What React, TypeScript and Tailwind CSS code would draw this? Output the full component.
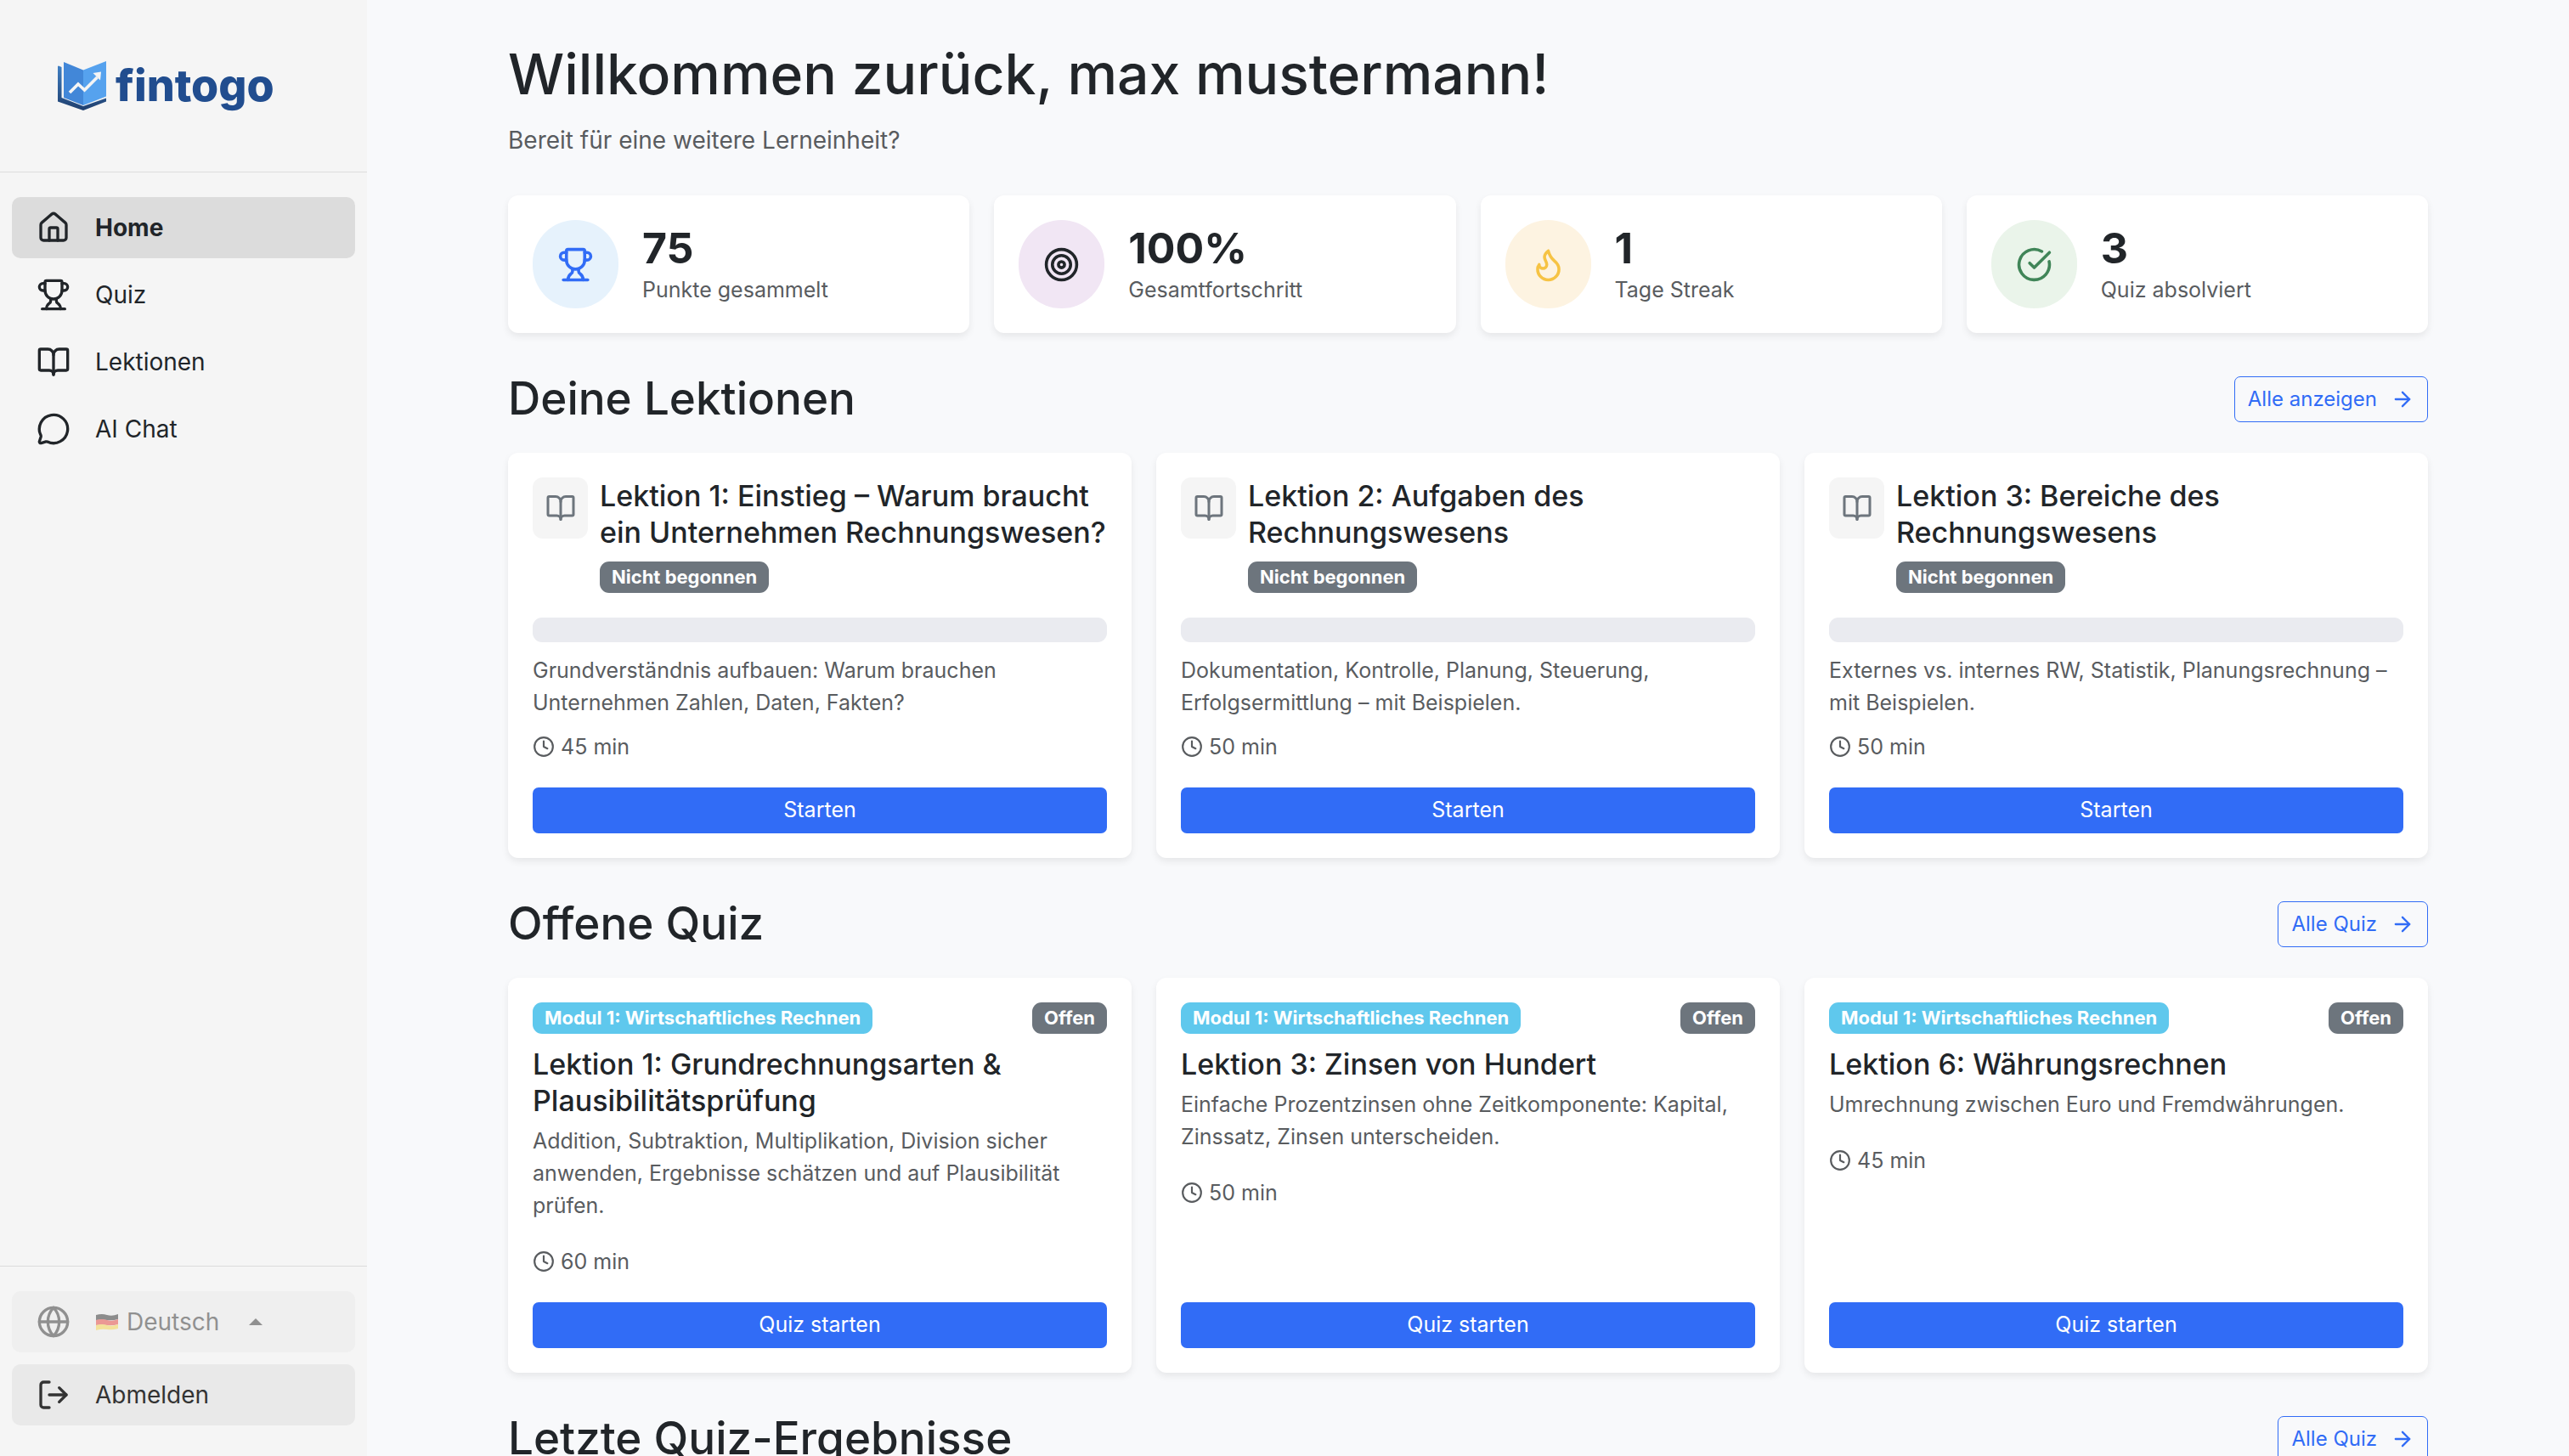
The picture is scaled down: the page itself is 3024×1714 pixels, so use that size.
import React from "react";
import {
  ArrowRight,
  BookOpen,
  CircleCheckBig,
  Clock,
  Flame,
  Globe,
  House,
  LogOut,
  MessageCircle,
  Target,
  Trophy,
  type LucideIcon,
} from "lucide-react";

interface NavItem {
  label: string;
  icon: LucideIcon;
  active?: boolean;
}

interface Stat {
  value: string;
  label: string;
  icon: LucideIcon;
  circle: string;
  color: string;
}

interface Lesson {
  title: string;
  description: string;
  minutes: number;
}

const navItems: NavItem[] = [
  { label: "Home", icon: House, active: true },
  { label: "Quiz", icon: Trophy },
  { label: "Lektionen", icon: BookOpen },
  { label: "AI Chat", icon: MessageCircle },
];

const stats: Stat[] = [
  { value: "75", label: "Punkte gesammelt", icon: Trophy, circle: "bg-[#e6f2fc]", color: "text-[#316cf6]" },
  { value: "100%", label: "Gesamtfortschritt", icon: Target, circle: "bg-[#f1e6f4]", color: "text-[#212529]" },
  { value: "1", label: "Tage Streak", icon: Flame, circle: "bg-[#fdf3e1]", color: "text-[#f6c344]" },
  { value: "3", label: "Quiz absolviert", icon: CircleCheckBig, circle: "bg-[#eaf4ea]", color: "text-[#408558]" },
];

const lessons: Lesson[] = [
  {
    title: "Lektion 1: Einstieg – Warum braucht ein Unternehmen Rechnungswesen?",
    description: "Grundverständnis aufbauen: Warum brauchen Unternehmen Zahlen, Daten, Fakten?",
    minutes: 45,
  },
  {
    title: "Lektion 2: Aufgaben des Rechnungswesens",
    description: "Dokumentation, Kontrolle, Planung, Steuerung, Erfolgsermittlung – mit Beispielen.",
    minutes: 50,
  },
  {
    title: "Lektion 3: Bereiche des Rechnungswesens",
    description: "Externes vs. internes RW, Statistik, Planungsrechnung – mit Beispielen.",
    minutes: 50,
  },
];

const quizzes: Lesson[] = [
  {
    title: "Lektion 1: Grundrechnungsarten & Plausibilitätsprüfung",
    description:
      "Addition, Subtraktion, Multiplikation, Division sicher anwenden, Ergebnisse schätzen und auf Plausibilität prüfen.",
    minutes: 60,
  },
  {
    title: "Lektion 3: Zinsen von Hundert",
    description: "Einfache Prozentzinsen ohne Zeitkomponente: Kapital, Zinssatz, Zinsen unterscheiden.",
    minutes: 50,
  },
  {
    title: "Lektion 6: Währungsrechnen",
    description: "Umrechnung zwischen Euro und Fremdwährungen.",
    minutes: 45,
  },
];

const Logo: React.FC = () => (
  <a href="#" className="flex items-center gap-[10px] text-[#214d8f]">
    <svg viewBox="0 0 58 58" className="h-[58px] w-[58px]" aria-hidden="true">
      <defs>
        <linearGradient id="spine" x1="0" y1="0" x2="0" y2="1">
          <stop offset="0" stopColor="#3f7fc4" />
          <stop offset="1" stopColor="#1f3f6e" />
        </linearGradient>
      </defs>
      <path d="M0 6 L1 5.500 L4.500 7 V43 L30 53 L57 43.500 V47.500 L30 58 L0 47.500 Z" fill="url(#spine)" />
      <path d="M7 1 L30 10.500 V52 L7 43 Z" fill="#4287d8" />
      <path d="M30 10.500 L57 0 V41.500 L30 52 Z" fill="#56a2ee" />
      <path d="M14 37 L24 27 L31.500 34 L46.500 19" fill="none" stroke="#f5f5f5" strokeWidth="3.600" />
      <path d="M41.500 14 L51 12.500 L50 22.500 Z" fill="#f5f5f5" />
    </svg>
    <span className="text-[52px] leading-[58px] font-extrabold">fintogo</span>
  </a>
);

const GermanFlag: React.FC = () => (
  <svg viewBox="0 0 26 20" className="h-5 w-[26px]" aria-hidden="true">
    <path d="M0 2 Q7 0 13 2 T26 1 V7 Q19 9 13 8 T0 8 Z" fill="#2b2b2b" />
    <path d="M0 8 Q7 6 13 8 T26 7 V13 Q19 15 13 14 T0 14 Z" fill="#e8433c" />
    <path d="M0 14 Q7 12 13 14 T26 13 V18 Q19 20 13 19 T0 20 Z" fill="#f7d548" />
  </svg>
);

const Sidebar: React.FC = () => (
  <aside className="flex w-[432px] shrink-0 flex-col bg-[#f5f5f5]">
    <div className="flex h-[203px] items-center border-b border-[#dcdcdc] px-[68px]">
      <Logo />
    </div>
    <nav className="flex flex-1 flex-col gap-[7px] px-[14px] pt-[29px]">
      {navItems.map(({ label, icon: Icon, active }) => (
        <a
          key={label}
          href="#"
          className={`flex h-[72px] items-center gap-[29px] rounded-[10px] px-[29px] text-[28px] ${
            active ? "bg-[#dcdcdc] font-bold" : ""
          }`}
        >
          <Icon className="h-10 w-10" />
          {label}
        </a>
      ))}
    </nav>
    <div className="flex flex-col gap-[14px] border-t border-[#dcdcdc] px-[14px] pt-[29px] pb-9">
      <div className="flex h-[72px] items-center rounded-[10px] bg-[#efefef] px-[29px] text-[#333333]">
        <div className="flex items-center opacity-50">
          <Globe className="mr-[30px] h-10 w-10" />
          <GermanFlag />
          <select
            aria-label="Sprache"
            className="ml-[10px] w-[144px] appearance-none bg-transparent text-[28px]"
          >
            <option>Deutsch</option>
          </select>
          <span className="border-x-8 border-b-8 border-x-transparent border-b-[#333333]" />
        </div>
      </div>
      <button
        type="button"
        className="flex h-[72px] items-center gap-[29px] rounded-[10px] bg-[#e9e9e9] px-[29px] text-[28px] text-[#333333]"
      >
        <LogOut className="h-10 w-10" />
        Abmelden
      </button>
    </div>
  </aside>
);

const StatCard: React.FC<{ stat: Stat }> = ({ stat }) => {
  const Icon = stat.icon;
  return (
    <div className="flex items-center gap-7 rounded-xl bg-white p-[29px] shadow-[0_4px_8px_rgba(0,0,0,0.075)]">
      <div className={`flex h-[104px] w-[101px] items-center justify-center rounded-full ${stat.circle} ${stat.color}`}>
        <Icon className="h-[43px] w-[43px]" />
      </div>
      <div>
        <div className="text-[50px] leading-[60px] font-bold">{stat.value}</div>
        <div className="text-[25px] leading-[38px] text-[#595c5f]">{stat.label}</div>
      </div>
    </div>
  );
};

const SectionHeader: React.FC<{ title: string; action: string }> = ({ title, action }) => (
  <div className="mt-[43px] mb-[29px] flex items-center justify-between">
    <h2 className="text-[53px] leading-[69px] font-medium">{title}</h2>
    <a
      href="#"
      className="flex h-[54px] items-center gap-4 rounded-[7px] border border-[#316cf6] px-[15px] text-[24px] text-[#316cf6]"
    >
      {action}
      <ArrowRight className="h-7 w-7" />
    </a>
  </div>
);

const Badge: React.FC<{ color: string; children: React.ReactNode }> = ({ color, children }) => (
  <span className={`flex h-[37px] items-center rounded-[11px] px-[14px] text-[22px] font-bold text-white ${color}`}>
    {children}
  </span>
);

const Duration: React.FC<{ minutes: number }> = ({ minutes }) => (
  <div className="flex items-center gap-[7px] text-[25px] leading-[38px] text-[#595c5f]">
    <Clock className="h-[26px] w-[26px]" />
    {minutes} min
  </div>
);

const PrimaryButton: React.FC<{ children: React.ReactNode }> = ({ children }) => (
  <button type="button" className="h-[54px] w-full rounded-[7px] bg-[#316cf6] text-[25px] text-white">
    {children}
  </button>
);

const LessonCard: React.FC<{ lesson: Lesson }> = ({ lesson }) => (
  <article className="flex flex-col rounded-xl bg-white p-[29px] shadow-[0_4px_8px_rgba(0,0,0,0.075)]">
    <div className="flex items-start gap-[14px]">
      <div className="flex h-[72px] w-[65px] shrink-0 items-center justify-center rounded-xl bg-[#f5f5f5] text-[#6d757d]">
        <BookOpen className="h-9 w-9" />
      </div>
      <div className="flex flex-col items-start gap-[13px]">
        <h3 className="text-[34px] leading-[43px] font-medium">{lesson.title}</h3>
        <Badge color="bg-[#6d757d]">Nicht begonnen</Badge>
      </div>
    </div>
    <div
      role="progressbar"
      aria-label="Fortschritt"
      aria-valuenow={0}
      className="mt-[29px] h-[29px] rounded-[11px] bg-[#eaebf0]"
    />
    <p className="mt-[14px] mb-[14px] text-[25px] leading-[38px] text-[#595c5f]">{lesson.description}</p>
    <Duration minutes={lesson.minutes} />
    <div className="mt-auto pt-[29px]">
      <PrimaryButton>Starten</PrimaryButton>
    </div>
  </article>
);

const QuizCard: React.FC<{ quiz: Lesson }> = ({ quiz }) => (
  <article className="flex flex-col rounded-xl bg-white p-[29px] shadow-[0_4px_8px_rgba(0,0,0,0.075)]">
    <div className="mb-[14px] flex items-center justify-between">
      <Badge color="bg-[#5fc8ed]">Modul 1: Wirtschaftliches Rechnen</Badge>
      <Badge color="bg-[#6d757d]">Offen</Badge>
    </div>
    <h3 className="text-[34px] leading-[43px] font-medium">{quiz.title}</h3>
    <p className="mt-[7px] mb-7 text-[25px] leading-[38px] text-[#595c5f]">{quiz.description}</p>
    <Duration minutes={quiz.minutes} />
    <div className="mt-auto pt-[29px]">
      <PrimaryButton>Quiz starten</PrimaryButton>
    </div>
  </article>
);

const App: React.FC = () => {
  return (
    <div className="flex h-screen overflow-hidden bg-[#f8f9fb] font-['Inter',sans-serif] text-[#212529]">
      <Sidebar />
      <main className="flex-1 overflow-y-auto [scrollbar-width:none]">
        <div className="mx-auto max-w-[2260px] py-11">
          <h1 className="text-[66px] leading-[86px] font-medium">Willkommen zurück, max mustermann!</h1>
          <p className="mt-[14px] mb-[43px] text-[28px] leading-[43px] text-[#595c5f]">
            Bereit für eine weitere Lerneinheit?
          </p>

          <div className="grid grid-cols-4 gap-[29px]">
            {stats.map((stat) => (
              <StatCard key={stat.label} stat={stat} />
            ))}
          </div>

          <SectionHeader title="Deine Lektionen" action="Alle anzeigen" />
          <div className="grid grid-cols-3 gap-[29px]">
            {lessons.map((lesson) => (
              <LessonCard key={lesson.title} lesson={lesson} />
            ))}
          </div>

          <SectionHeader title="Offene Quiz" action="Alle Quiz" />
          <div className="grid grid-cols-3 gap-[29px]">
            {quizzes.map((quiz) => (
              <QuizCard key={quiz.title} quiz={quiz} />
            ))}
          </div>

          <SectionHeader title="Letzte Quiz-Ergebnisse" action="Alle Quiz" />
        </div>
      </main>
    </div>
  );
};

export default App;
